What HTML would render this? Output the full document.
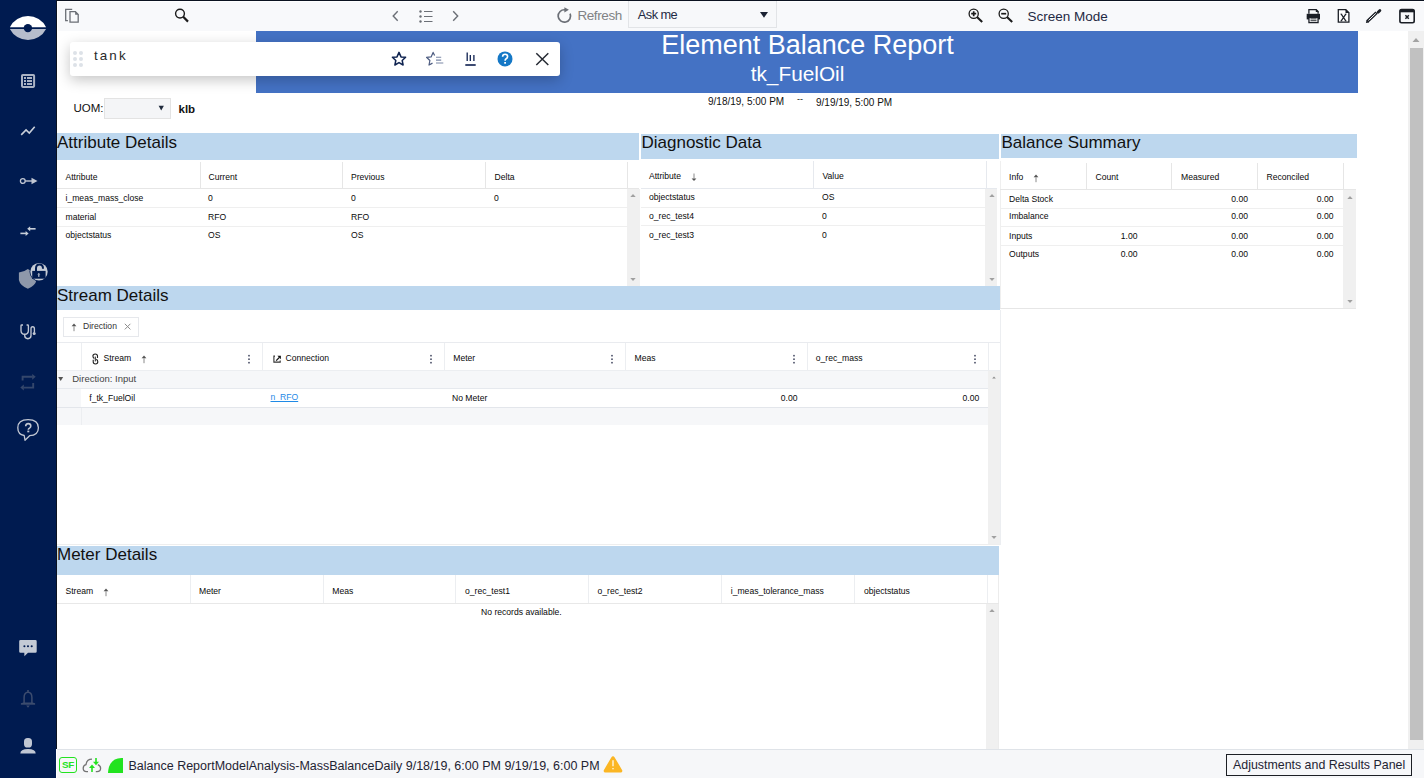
<!DOCTYPE html>
<html><head><meta charset="utf-8"><title>Element Balance Report</title>
<style>
html,body{margin:0;padding:0;width:1424px;height:778px;overflow:hidden;background:#fff;}
body{position:relative;font-family:"Liberation Sans",sans-serif;}
.r{position:absolute;display:block;}
.t{position:absolute;white-space:nowrap;line-height:1;}
</style></head><body>
<div class="r" style="left:0px;top:0px;width:1424px;height:778px;background:#ffffff;"></div>
<div class="r" style="left:0px;top:0px;width:56px;height:778px;background:#001b50;"></div>
<div class="r" style="left:56px;top:0px;width:1px;height:749px;background:#0b1220;"></div>
<div class="r" style="left:57px;top:0px;width:1367px;height:1px;background:#0b1220;"></div>
<div class="r" style="left:57px;top:1px;width:1367px;height:30px;background:#f8f9fb;"></div>
<div class="r" style="left:57px;top:1px;width:1367px;height:1px;background:#ffffff;"></div>
<div class="r" style="left:57px;top:1px;width:1px;height:30px;background:#ffffff;"></div>
<div class="r" style="left:1408px;top:31px;width:16px;height:718px;background:#f0f0f0;"></div>
<div class="r" style="left:1410px;top:48px;width:13px;height:692px;background:#c1c1c1;"></div>
<svg class="r" style="left:1408px;top:31px;" width="16" height="16" viewBox="0 0 16 16"><path d="M4.5 11 L8 7 L11.5 11 Z" fill="#a3a3a3"/></svg>
<div class="r" style="left:256px;top:31px;width:1102px;height:62px;background:#4472c4;"></div>
<div class="t" style="left:207.5px;width:1200px;text-align:center;top:31.74px;font-size:27px;color:#fff;font-weight:400;">Element Balance Report</div>
<div class="t" style="left:197.5px;width:1200px;text-align:center;top:63.89px;font-size:20.8px;color:#fff;font-weight:400;">tk_FuelOil</div>
<div class="t" style="left:708px;top:97.03px;font-size:10px;color:#111;font-weight:400;">9/18/19, 5:00 PM</div>
<div class="t" style="left:797px;top:94.98px;font-size:9px;color:#111;font-weight:400;">--</div>
<div class="t" style="left:816px;top:97.53px;font-size:10px;color:#111;font-weight:400;">9/19/19, 5:00 PM</div>
<div class="t" style="left:73.5px;top:103.27px;font-size:11.5px;color:#111;font-weight:400;">UOM:</div>
<div class="r" style="left:104px;top:98px;width:67px;height:21px;background:#f4f5f7;border:1px solid #e3e3e3;box-sizing:border-box;"></div>
<svg class="r" style="left:158px;top:105px;" width="7" height="7" viewBox="0 0 7 7"><path d="M0.6 0.7 L5.9 0.7 L3.25 5.6 Z" fill="#1f2a3c"/></svg>
<div class="t" style="left:178.5px;top:103.57px;font-size:11.5px;color:#111;font-weight:700;">klb</div>
<div class="r" style="left:57px;top:133px;width:582px;height:27px;background:#bdd7ee;"></div>
<div class="t" style="left:57px;top:133.61px;font-size:17px;color:#111;font-weight:400;">Attribute Details</div>
<div class="r" style="left:641px;top:134px;width:358px;height:25px;background:#bdd7ee;"></div>
<div class="t" style="left:641.5px;top:134.41px;font-size:17px;color:#111;font-weight:400;">Diagnostic Data</div>
<div class="r" style="left:1001px;top:134px;width:356px;height:24px;background:#bdd7ee;"></div>
<div class="t" style="left:1001.5px;top:133.61px;font-size:17px;color:#111;font-weight:400;">Balance Summary</div>
<div class="r" style="left:57px;top:286px;width:943px;height:24px;background:#bdd7ee;"></div>
<div class="t" style="left:57px;top:287.11px;font-size:17px;color:#111;font-weight:400;">Stream Details</div>
<div class="r" style="left:57px;top:546px;width:942px;height:29px;background:#bdd7ee;"></div>
<div class="t" style="left:57px;top:546.11px;font-size:17px;color:#111;font-weight:400;">Meter Details</div>
<div class="r" style="left:200px;top:162px;width:1px;height:26px;background:#e6e6e6;"></div>
<div class="r" style="left:342px;top:162px;width:1px;height:26px;background:#e6e6e6;"></div>
<div class="r" style="left:485px;top:162px;width:1px;height:26px;background:#e6e6e6;"></div>
<div class="r" style="left:627px;top:162px;width:1px;height:26px;background:#e6e6e6;"></div>
<div class="r" style="left:57px;top:188px;width:582px;height:1px;background:#e6e6e6;"></div>
<div class="r" style="left:627px;top:189px;width:13px;height:97px;background:#f0f0f0;"></div>
<svg class="r" style="left:629px;top:193px;" width="8" height="5" viewBox="0 0 8 5"><path d="M1.3 3.9 L4 1.1 L6.7 3.9 Z" fill="#a0a0a0"/></svg>
<svg class="r" style="left:629px;top:276.5px;" width="8" height="5" viewBox="0 0 8 5"><path d="M1.3 1.1 L4 3.9 L6.7 1.1 Z" fill="#a0a0a0"/></svg>
<div class="t" style="left:65.5px;top:172.72px;font-size:8.6px;color:#0a0a0a;font-weight:400;">Attribute</div>
<div class="t" style="left:208.5px;top:172.72px;font-size:8.6px;color:#0a0a0a;font-weight:400;">Current</div>
<div class="t" style="left:351px;top:172.72px;font-size:8.6px;color:#0a0a0a;font-weight:400;">Previous</div>
<div class="t" style="left:494.5px;top:172.72px;font-size:8.6px;color:#0a0a0a;font-weight:400;">Delta</div>
<div class="r" style="left:57px;top:207px;width:571px;height:1px;background:#efefef;"></div>
<div class="r" style="left:57px;top:226px;width:571px;height:1px;background:#efefef;"></div>
<div class="t" style="left:65.5px;top:194.02px;font-size:8.6px;color:#0a0a0a;font-weight:400;">i_meas_mass_close</div>
<div class="t" style="left:208px;top:194.02px;font-size:8.6px;color:#0a0a0a;font-weight:400;">0</div>
<div class="t" style="left:351px;top:194.02px;font-size:8.6px;color:#0a0a0a;font-weight:400;">0</div>
<div class="t" style="left:494px;top:194.02px;font-size:8.6px;color:#0a0a0a;font-weight:400;">0</div>
<div class="t" style="left:65.5px;top:212.72px;font-size:8.6px;color:#0a0a0a;font-weight:400;">material</div>
<div class="t" style="left:208px;top:212.72px;font-size:8.6px;color:#0a0a0a;font-weight:400;">RFO</div>
<div class="t" style="left:351px;top:212.72px;font-size:8.6px;color:#0a0a0a;font-weight:400;">RFO</div>
<div class="t" style="left:494px;top:212.72px;font-size:8.6px;color:#0a0a0a;font-weight:400;"></div>
<div class="t" style="left:65.5px;top:230.72px;font-size:8.6px;color:#0a0a0a;font-weight:400;">objectstatus</div>
<div class="t" style="left:208px;top:230.72px;font-size:8.6px;color:#0a0a0a;font-weight:400;">OS</div>
<div class="t" style="left:351px;top:230.72px;font-size:8.6px;color:#0a0a0a;font-weight:400;">OS</div>
<div class="t" style="left:494px;top:230.72px;font-size:8.6px;color:#0a0a0a;font-weight:400;"></div>
<div class="r" style="left:813px;top:161px;width:1px;height:27px;background:#e6e9ee;"></div>
<div class="r" style="left:986px;top:161px;width:1px;height:27px;background:#e6e9ee;"></div>
<div class="r" style="left:641px;top:188px;width:356px;height:1px;background:#e6e9ee;"></div>
<div class="r" style="left:985px;top:189px;width:12px;height:97px;background:#f0f0f0;"></div>
<svg class="r" style="left:987.5px;top:193px;" width="8" height="5" viewBox="0 0 8 5"><path d="M1.3 3.9 L4 1.1 L6.7 3.9 Z" fill="#a0a0a0"/></svg>
<svg class="r" style="left:987.5px;top:277px;" width="8" height="5" viewBox="0 0 8 5"><path d="M1.3 1.1 L4 3.9 L6.7 1.1 Z" fill="#a0a0a0"/></svg>
<div class="t" style="left:649px;top:171.52px;font-size:8.6px;color:#0a0a0a;font-weight:400;">Attribute</div>
<svg class="r" style="left:690.5px;top:172.5px;" width="6" height="9" viewBox="0 0 6 9"><path d="M3 0.5 L3 5.6" stroke="#8a8a8a" stroke-width="1"/><path d="M0.6 5.5 L3 7.9 L5.4 5.5 Z" fill="#555"/></svg>
<div class="t" style="left:822.5px;top:171.52px;font-size:8.6px;color:#0a0a0a;font-weight:400;">Value</div>
<div class="r" style="left:641px;top:207px;width:345px;height:1px;background:#efefef;"></div>
<div class="r" style="left:641px;top:225px;width:345px;height:1px;background:#efefef;"></div>
<div class="t" style="left:649px;top:192.72px;font-size:8.6px;color:#0a0a0a;font-weight:400;">objectstatus</div>
<div class="t" style="left:822px;top:192.72px;font-size:8.6px;color:#0a0a0a;font-weight:400;">OS</div>
<div class="t" style="left:649px;top:211.52px;font-size:8.6px;color:#0a0a0a;font-weight:400;">o_rec_test4</div>
<div class="t" style="left:822px;top:211.52px;font-size:8.6px;color:#0a0a0a;font-weight:400;">0</div>
<div class="t" style="left:649px;top:230.72px;font-size:8.6px;color:#0a0a0a;font-weight:400;">o_rec_test3</div>
<div class="t" style="left:822px;top:230.72px;font-size:8.6px;color:#0a0a0a;font-weight:400;">0</div>
<div class="r" style="left:1000px;top:161px;width:1px;height:148px;background:#efefef;"></div>
<div class="r" style="left:1086px;top:163px;width:1px;height:26px;background:#e6e6e6;"></div>
<div class="r" style="left:1171px;top:163px;width:1px;height:26px;background:#e6e6e6;"></div>
<div class="r" style="left:1257px;top:163px;width:1px;height:26px;background:#e6e6e6;"></div>
<div class="r" style="left:1343px;top:163px;width:1px;height:26px;background:#e6e6e6;"></div>
<div class="r" style="left:1000px;top:189px;width:356px;height:1px;background:#e6e6e6;"></div>
<div class="r" style="left:1000px;top:308px;width:356px;height:1px;background:#e6e6e6;"></div>
<div class="r" style="left:1343px;top:190px;width:13px;height:118px;background:#f0f0f0;"></div>
<svg class="r" style="left:1346px;top:195px;" width="8" height="5" viewBox="0 0 8 5"><path d="M1.3 3.9 L4 1.1 L6.7 3.9 Z" fill="#a0a0a0"/></svg>
<svg class="r" style="left:1346px;top:299px;" width="8" height="5" viewBox="0 0 8 5"><path d="M1.3 1.1 L4 3.9 L6.7 1.1 Z" fill="#a0a0a0"/></svg>
<div class="t" style="left:1009px;top:172.72px;font-size:8.6px;color:#0a0a0a;font-weight:400;">Info</div>
<svg class="r" style="left:1033px;top:173.5px;" width="6" height="9" viewBox="0 0 6 9"><path d="M0.6 3.3 L3 0.5 L5.4 3.3 Z" fill="#555"/><path d="M3 3.2 L3 8.2" stroke="#8a8a8a" stroke-width="1"/></svg>
<div class="t" style="left:1095.5px;top:172.72px;font-size:8.6px;color:#0a0a0a;font-weight:400;">Count</div>
<div class="t" style="left:1181px;top:172.72px;font-size:8.6px;color:#0a0a0a;font-weight:400;">Measured</div>
<div class="t" style="left:1266.5px;top:172.72px;font-size:8.6px;color:#0a0a0a;font-weight:400;">Reconciled</div>
<div class="r" style="left:1000px;top:208px;width:343px;height:1px;background:#efefef;"></div>
<div class="r" style="left:1000px;top:226px;width:343px;height:1px;background:#efefef;"></div>
<div class="r" style="left:1000px;top:245px;width:343px;height:1px;background:#efefef;"></div>
<div class="t" style="left:1009px;top:194.52px;font-size:8.6px;color:#0a0a0a;font-weight:400;">Delta Stock</div>
<div class="t" style="left:648px;width:600px;text-align:right;top:194.52px;font-size:8.6px;color:#0a0a0a;font-weight:400;">0.00</div>
<div class="t" style="left:733.5px;width:600px;text-align:right;top:194.52px;font-size:8.6px;color:#0a0a0a;font-weight:400;">0.00</div>
<div class="t" style="left:1009px;top:212.22px;font-size:8.6px;color:#0a0a0a;font-weight:400;">Imbalance</div>
<div class="t" style="left:648px;width:600px;text-align:right;top:212.22px;font-size:8.6px;color:#0a0a0a;font-weight:400;">0.00</div>
<div class="t" style="left:733.5px;width:600px;text-align:right;top:212.22px;font-size:8.6px;color:#0a0a0a;font-weight:400;">0.00</div>
<div class="t" style="left:1009px;top:231.52px;font-size:8.6px;color:#0a0a0a;font-weight:400;">Inputs</div>
<div class="t" style="left:537.5px;width:600px;text-align:right;top:231.52px;font-size:8.6px;color:#0a0a0a;font-weight:400;">1.00</div>
<div class="t" style="left:648px;width:600px;text-align:right;top:231.52px;font-size:8.6px;color:#0a0a0a;font-weight:400;">0.00</div>
<div class="t" style="left:733.5px;width:600px;text-align:right;top:231.52px;font-size:8.6px;color:#0a0a0a;font-weight:400;">0.00</div>
<div class="t" style="left:1009px;top:249.52px;font-size:8.6px;color:#0a0a0a;font-weight:400;">Outputs</div>
<div class="t" style="left:537.5px;width:600px;text-align:right;top:249.52px;font-size:8.6px;color:#0a0a0a;font-weight:400;">0.00</div>
<div class="t" style="left:648px;width:600px;text-align:right;top:249.52px;font-size:8.6px;color:#0a0a0a;font-weight:400;">0.00</div>
<div class="t" style="left:733.5px;width:600px;text-align:right;top:249.52px;font-size:8.6px;color:#0a0a0a;font-weight:400;">0.00</div>
<div class="r" style="left:63px;top:317px;width:76px;height:20px;background:#fff;border:1px solid #e6e8ec;box-sizing:border-box;"></div>
<svg class="r" style="left:70.5px;top:322.5px;" width="6" height="9" viewBox="0 0 6 9"><path d="M0.6 3.3 L3 0.5 L5.4 3.3 Z" fill="#555"/><path d="M3 3.2 L3 8.2" stroke="#8a8a8a" stroke-width="1"/></svg>
<div class="t" style="left:83px;top:322.22px;font-size:8.6px;color:#333;font-weight:400;">Direction</div>
<svg class="r" style="left:123px;top:322px;" width="9" height="9" viewBox="0 0 9 9"><path d="M1.8 1.8 L7.4 7.4 M7.4 1.8 L1.8 7.4" stroke="#8c8c8c" stroke-width="1"/></svg>
<div class="r" style="left:57px;top:342px;width:943px;height:1px;background:#e9ebef;"></div>
<div class="r" style="left:81px;top:343px;width:1px;height:27px;background:#eceef1;"></div>
<div class="r" style="left:262px;top:343px;width:1px;height:27px;background:#eceef1;"></div>
<div class="r" style="left:444px;top:343px;width:1px;height:27px;background:#eceef1;"></div>
<div class="r" style="left:625px;top:343px;width:1px;height:27px;background:#eceef1;"></div>
<div class="r" style="left:807px;top:343px;width:1px;height:27px;background:#eceef1;"></div>
<div class="r" style="left:988px;top:343px;width:1px;height:27px;background:#eceef1;"></div>
<div class="r" style="left:1000px;top:310px;width:1px;height:235px;background:#eceef1;"></div>
<div class="r" style="left:57px;top:370px;width:943px;height:1px;background:#eceef1;"></div>
<svg class="r" style="left:91px;top:353px;" width="9" height="12" viewBox="0 0 9 12"><path d="M3.3 5.6 Q1.9 4.6 1.9 3.1 Q1.9 1 4.2 1 Q6.5 1 6.5 3.1 L6.5 5" fill="none" stroke="#222" stroke-width="1.1"/><path d="M5.3 6.2 Q6.8 7.2 6.8 8.8 Q6.8 11 4.5 11 Q2.2 11 2.2 8.8 L2.2 6.8" fill="none" stroke="#222" stroke-width="1.1"/><path d="M4.3 3.6 L4.3 8.4" stroke="#222" stroke-width="1"/></svg>
<div class="t" style="left:103.5px;top:353.72px;font-size:8.6px;color:#0a0a0a;font-weight:400;">Stream</div>
<svg class="r" style="left:141px;top:355.0px;" width="6" height="9" viewBox="0 0 6 9"><path d="M0.6 3.3 L3 0.5 L5.4 3.3 Z" fill="#555"/><path d="M3 3.2 L3 8.2" stroke="#8a8a8a" stroke-width="1"/></svg>
<svg class="r" style="left:247px;top:352.5px;" width="4" height="11" viewBox="0 0 4 11"><circle cx="2" cy="2.7" r="0.9" fill="#4a4f66"/><circle cx="2" cy="6.2" r="0.9" fill="#4a4f66"/><circle cx="2" cy="9.7" r="0.9" fill="#4a4f66"/></svg>
<svg class="r" style="left:272px;top:353px;" width="10" height="11" viewBox="0 0 10 11"><path d="M3 3.1 L1.9 3.1 L1.9 9.1 L8.2 9.1 L8.2 7.6" fill="none" stroke="#333" stroke-width="1.1"/><path d="M4.2 7.6 L7.4 4.4" stroke="#111" stroke-width="1.3"/><path d="M5.4 2.7 L8.9 2.7 L8.9 6.2 Z" fill="#111"/></svg>
<div class="t" style="left:285.5px;top:353.72px;font-size:8.6px;color:#0a0a0a;font-weight:400;">Connection</div>
<svg class="r" style="left:428.75px;top:352.5px;" width="4" height="11" viewBox="0 0 4 11"><circle cx="2" cy="2.7" r="0.9" fill="#4a4f66"/><circle cx="2" cy="6.2" r="0.9" fill="#4a4f66"/><circle cx="2" cy="9.7" r="0.9" fill="#4a4f66"/></svg>
<div class="t" style="left:453.25px;top:353.72px;font-size:8.6px;color:#0a0a0a;font-weight:400;">Meter</div>
<svg class="r" style="left:610px;top:352.5px;" width="4" height="11" viewBox="0 0 4 11"><circle cx="2" cy="2.7" r="0.9" fill="#4a4f66"/><circle cx="2" cy="6.2" r="0.9" fill="#4a4f66"/><circle cx="2" cy="9.7" r="0.9" fill="#4a4f66"/></svg>
<div class="t" style="left:634.5px;top:353.72px;font-size:8.6px;color:#0a0a0a;font-weight:400;">Meas</div>
<svg class="r" style="left:791.75px;top:352.5px;" width="4" height="11" viewBox="0 0 4 11"><circle cx="2" cy="2.7" r="0.9" fill="#4a4f66"/><circle cx="2" cy="6.2" r="0.9" fill="#4a4f66"/><circle cx="2" cy="9.7" r="0.9" fill="#4a4f66"/></svg>
<div class="t" style="left:815.75px;top:353.72px;font-size:8.6px;color:#0a0a0a;font-weight:400;">o_rec_mass</div>
<svg class="r" style="left:973px;top:352.5px;" width="4" height="11" viewBox="0 0 4 11"><circle cx="2" cy="2.7" r="0.9" fill="#4a4f66"/><circle cx="2" cy="6.2" r="0.9" fill="#4a4f66"/><circle cx="2" cy="9.7" r="0.9" fill="#4a4f66"/></svg>
<div class="r" style="left:57px;top:371px;width:931px;height:17px;background:#f6f7f9;"></div>
<div class="r" style="left:57px;top:388px;width:931px;height:1px;background:#e6e9ee;"></div>
<svg class="r" style="left:57px;top:376px;" width="8" height="6" viewBox="0 0 8 6"><path d="M1.2 1 L6.2 1 L3.7 5 Z" fill="#555"/></svg>
<div class="t" style="left:72.25px;top:374.26px;font-size:9.5px;color:#444;font-weight:400;">Direction: Input</div>
<div class="r" style="left:57px;top:389px;width:24px;height:18px;background:#f6f7f9;"></div>
<div class="r" style="left:81px;top:389px;width:907px;height:18px;background:#fff;"></div>
<div class="r" style="left:57px;top:407px;width:931px;height:1px;background:#e3e6eb;"></div>
<div class="t" style="left:89.25px;top:393.72px;font-size:8.6px;color:#0a0a0a;font-weight:400;">f_tk_FuelOil</div>
<div class="t" style="left:270.5px;top:393.12px;font-size:8.6px;color:#1f8ae6;font-weight:400;text-decoration:underline;">n_RFO</div>
<div class="t" style="left:452px;top:393.72px;font-size:8.6px;color:#0a0a0a;font-weight:400;">No Meter</div>
<div class="t" style="left:197.5px;width:600px;text-align:right;top:393.72px;font-size:8.6px;color:#0a0a0a;font-weight:400;">0.00</div>
<div class="t" style="left:379.25px;width:600px;text-align:right;top:393.72px;font-size:8.6px;color:#0a0a0a;font-weight:400;">0.00</div>
<div class="r" style="left:57px;top:408px;width:931px;height:17px;background:#f6f7f9;"></div>
<div class="r" style="left:81px;top:408px;width:1px;height:17px;background:#eceef1;"></div>
<div class="r" style="left:988px;top:371px;width:12px;height:173px;background:#f0f0f0;"></div>
<svg class="r" style="left:990px;top:375px;" width="8" height="5" viewBox="0 0 8 5"><path d="M2.2 3.6 L4 1.6 L5.8 3.6 Z" fill="#8a8a8a"/></svg>
<svg class="r" style="left:990px;top:535px;" width="8" height="5" viewBox="0 0 8 5"><path d="M1.3 1.1 L4 3.9 L6.7 1.1 Z" fill="#a0a0a0"/></svg>
<div class="r" style="left:57px;top:544px;width:943px;height:1px;background:#eeeeee;"></div>
<div class="r" style="left:190px;top:575px;width:1px;height:28px;background:#eceef1;"></div>
<div class="r" style="left:323px;top:575px;width:1px;height:28px;background:#eceef1;"></div>
<div class="r" style="left:455px;top:575px;width:1px;height:28px;background:#eceef1;"></div>
<div class="r" style="left:588px;top:575px;width:1px;height:28px;background:#eceef1;"></div>
<div class="r" style="left:721px;top:575px;width:1px;height:28px;background:#eceef1;"></div>
<div class="r" style="left:854px;top:575px;width:1px;height:28px;background:#eceef1;"></div>
<div class="r" style="left:987px;top:575px;width:1px;height:28px;background:#eceef1;"></div>
<div class="r" style="left:998px;top:575px;width:1px;height:174px;background:#ececec;"></div>
<div class="r" style="left:57px;top:603px;width:942px;height:1px;background:#e8e8e8;"></div>
<div class="t" style="left:65.5px;top:586.52px;font-size:8.6px;color:#0a0a0a;font-weight:400;">Stream</div>
<svg class="r" style="left:102.5px;top:587.7px;" width="6" height="9" viewBox="0 0 6 9"><path d="M0.6 3.3 L3 0.5 L5.4 3.3 Z" fill="#555"/><path d="M3 3.2 L3 8.2" stroke="#8a8a8a" stroke-width="1"/></svg>
<div class="t" style="left:199px;top:586.52px;font-size:8.6px;color:#0a0a0a;font-weight:400;">Meter</div>
<div class="t" style="left:332.25px;top:586.52px;font-size:8.6px;color:#0a0a0a;font-weight:400;">Meas</div>
<div class="t" style="left:465px;top:586.52px;font-size:8.6px;color:#0a0a0a;font-weight:400;">o_rec_test1</div>
<div class="t" style="left:597.5px;top:586.52px;font-size:8.6px;color:#0a0a0a;font-weight:400;">o_rec_test2</div>
<div class="t" style="left:730.75px;top:586.52px;font-size:8.6px;color:#0a0a0a;font-weight:400;">i_meas_tolerance_mass</div>
<div class="t" style="left:864px;top:586.52px;font-size:8.6px;color:#0a0a0a;font-weight:400;">objectstatus</div>
<div class="t" style="left:-78.60000000000002px;width:1200px;text-align:center;top:607.72px;font-size:8.6px;color:#0a0a0a;font-weight:400;">No records available.</div>
<div class="r" style="left:986px;top:604px;width:12px;height:145px;background:#f0f0f0;"></div>
<svg class="r" style="left:988px;top:608px;" width="8" height="5" viewBox="0 0 8 5"><path d="M1.3 3.9 L4 1.1 L6.7 3.9 Z" fill="#a0a0a0"/></svg>
<div class="r" style="left:57px;top:749px;width:1367px;height:1px;background:#dfe3e8;"></div>
<div class="r" style="left:57px;top:750px;width:1367px;height:28px;background:#f6f7f9;"></div>
<div class="r" style="left:59px;top:757px;width:18px;height:16px;background:transparent;border:1.8px solid #22e31f;border-radius:3px;box-sizing:border-box;"></div>
<div class="t" style="left:62px;top:759.92px;font-size:9.9px;color:#22e31f;font-weight:700;letter-spacing:-0.4px;">SF</div>
<svg class="r" style="left:82px;top:757px;" width="20" height="16" viewBox="0 0 20 16"><path d="M6 14.6 L4.5 14.6 Q1.2 14.6 1.2 11.2 Q1.2 8.2 4 7.6 Q4.8 2.2 10 2.2" fill="none" stroke="#737373" stroke-width="1.3"/><path d="M15.8 7.6 Q18.6 8.6 18.6 11.2 Q18.6 14.6 15 14.6 L13.8 14.6" fill="none" stroke="#737373" stroke-width="1.3"/><path d="M10 15 L10 9" stroke="#22e31f" stroke-width="1.6"/><path d="M7 11 L10 7.6 L13 11 Z" fill="#22e31f"/><path d="M14 1 L14 6.5" stroke="#22e31f" stroke-width="1.6"/><path d="M11 4.8 L14 8.2 L17 4.8 Z" fill="#22e31f"/></svg>
<svg class="r" style="left:108px;top:757.8px;" width="15" height="15" viewBox="0 0 15 15"><path d="M0 15 Q0.8 0.4 13.5 0 L15 0 L15 15 Z" fill="#22e31f"/></svg>
<div class="t" style="left:128.5px;top:760.02px;font-size:12.5px;color:#1f2433;font-weight:400;">Balance ReportModelAnalysis-MassBalanceDaily 9/18/19, 6:00 PM 9/19/19, 6:00 PM</div>
<svg class="r" style="left:603px;top:755px;" width="20" height="18" viewBox="0 0 20 18"><path d="M10 1.2 Q11 1.2 11.7 2.4 L19.2 15.2 Q19.8 16.6 18.3 17.6 L1.7 17.6 Q0.2 16.6 0.8 15.2 L8.3 2.4 Q9 1.2 10 1.2 Z" fill="#fbb624"/><path d="M10 5.3 L10 11.3" stroke="#fff6e0" stroke-width="1.4"/><rect x="9.3" y="13" width="1.4" height="1.3" fill="#fff6e0"/></svg>
<div class="r" style="left:1226px;top:754px;width:186px;height:22px;background:transparent;border:1px solid #1c1f24;box-sizing:border-box;"></div>
<div class="t" style="left:1233px;top:758.90px;font-size:12.4px;color:#1f2433;font-weight:400;">Adjustments and Results Panel</div>
<svg class="r" style="left:64px;top:8px;" width="16" height="16" viewBox="0 0 16 16"><path d="M8.2 1.4 L1.7 1.4 L1.7 12.6 L3.9 12.6" fill="none" stroke="#6b6f76" stroke-width="1.3"/><path d="M6 3.6 L11.4 3.6 L14.2 6.4 L14.2 14.1 L6 14.1 Z" fill="none" stroke="#6b6f76" stroke-width="1.3"/><path d="M11.1 3.2 L14.6 6.7 L11.1 6.7 Z" fill="#6b6f76"/></svg>
<svg class="r" style="left:172px;top:6px;" width="18" height="18" viewBox="0 0 18 18"><circle cx="8" cy="7.6" r="4.4" fill="none" stroke="#1b1b1b" stroke-width="1.4"/><path d="M11.2 10.8 L16 15.6" stroke="#1b1b1b" stroke-width="2.2"/></svg>
<svg class="r" style="left:390px;top:9px;" width="10" height="14" viewBox="0 0 10 14"><path d="M7.7 2.2 L3.2 7 L7.7 11.8" fill="none" stroke="#6b6f76" stroke-width="1.4"/></svg>
<svg class="r" style="left:418px;top:9px;" width="16" height="14" viewBox="0 0 16 14"><circle cx="2.5" cy="2.5" r="1.2" fill="#6b6f76"/><circle cx="2.5" cy="7.5" r="1.2" fill="#6b6f76"/><circle cx="2.5" cy="12.5" r="1.2" fill="#6b6f76"/><path d="M6 2.5 L14.5 2.5 M6 7.5 L14.5 7.5 M6 12.5 L14.5 12.5" stroke="#6b6f76" stroke-width="1.1"/></svg>
<svg class="r" style="left:450px;top:9px;" width="10" height="14" viewBox="0 0 10 14"><path d="M3.2 2.2 L7.7 7 L3.2 11.8" fill="none" stroke="#6b6f76" stroke-width="1.4"/></svg>
<svg class="r" style="left:556px;top:6px;" width="17" height="18" viewBox="0 0 17 18"><path d="M9 3.8 A6.2 6.2 0 1 0 14.1 7.6" fill="none" stroke="#6b6f76" stroke-width="1.7"/><path d="M8.4 1.2 L12.9 3.8 L8.4 6.4 Z" fill="#6b6f76"/></svg>
<div class="t" style="left:577.4px;top:9.17px;font-size:13.5px;color:#808285;font-weight:400;letter-spacing:-0.4px;">Refresh</div>
<div class="r" style="left:628px;top:1px;width:149px;height:27px;background:#f7f8fa;border:1px solid #e2e4e7;border-top:none;box-sizing:border-box;"></div>
<div class="t" style="left:637.8px;top:9.06px;font-size:12.8px;color:#1f2a44;font-weight:400;letter-spacing:-0.55px;">Ask me</div>
<svg class="r" style="left:759px;top:11px;" width="10" height="8" viewBox="0 0 10 8"><path d="M1 1 L9 1 L5 6.8 Z" fill="#1b2233"/></svg>
<svg class="r" style="left:967px;top:7px;" width="18" height="18" viewBox="0 0 18 18"><circle cx="6.7" cy="6.7" r="4.6" fill="none" stroke="#1b1b1b" stroke-width="1.3"/><path d="M10 10 L15.2 14.9" stroke="#1b1b1b" stroke-width="2.1"/><path d="M4.2 6.7 L9.2 6.7 M6.7 4.2 L6.7 9.2" stroke="#1b1b1b" stroke-width="1.7"/></svg>
<svg class="r" style="left:997px;top:7px;" width="18" height="18" viewBox="0 0 18 18"><circle cx="6.7" cy="6.7" r="4.6" fill="none" stroke="#1b1b1b" stroke-width="1.3"/><path d="M10 10 L15.2 14.9" stroke="#1b1b1b" stroke-width="2.1"/><path d="M4.2 6.7 L9.2 6.7" stroke="#1b1b1b" stroke-width="1.7"/></svg>
<div class="t" style="left:1027.5px;top:9.87px;font-size:13.5px;color:#1f2a44;font-weight:400;">Screen Mode</div>
<svg class="r" style="left:1305px;top:8px;" width="17" height="16" viewBox="0 0 17 16"><path d="M3.9 5.8 L3.9 1.7 L11.2 1.7 L13.1 3.6 L13.1 5.8" fill="none" stroke="#1b1f26" stroke-width="1.3"/><path d="M10.8 1.1 L13.7 4 L10.8 4 Z" fill="#1b1f26"/><rect x="1.7" y="5.8" width="13.3" height="3.3" fill="#1b1f26"/><rect x="1.7" y="8.8" width="2.4" height="2.6" fill="#1b1f26"/><rect x="12.8" y="8.8" width="2.2" height="2.6" fill="#1b1f26"/><rect x="3.95" y="9.5" width="9.1" height="5.1" fill="#fff" stroke="#1b1f26" stroke-width="1.3"/><path d="M5.5 10.9 L11.5 10.9 M5.5 12.7 L11.5 12.7" stroke="#1b1f26" stroke-width="0.9"/></svg>
<svg class="r" style="left:1336px;top:8px;" width="15" height="16" viewBox="0 0 15 16"><path d="M2.3 1.7 L9.8 1.7 L12.9 4.8 L12.9 14.2 L2.3 14.2 Z" fill="#fff" stroke="#1b1f26" stroke-width="1.3"/><path d="M9.5 1.1 L13.5 5.1 L9.5 5.1 Z" fill="#1b1f26"/><path d="M5.2 6.2 L9.8 12.8 M9.8 6.2 L5.2 12.8" stroke="#1b1f26" stroke-width="1.2"/><path d="M4.4 6.1 L6.2 6.1 M8.8 6.1 L10.6 6.1 M4.4 12.9 L6.2 12.9 M8.8 12.9 L10.6 12.9" stroke="#1b1f26" stroke-width="0.7"/></svg>
<svg class="r" style="left:1365px;top:8px;" width="17" height="16" viewBox="0 0 17 16"><path d="M2.4 13.4 L11.6 4.6" stroke="#1b1f26" stroke-width="3.2"/><path d="M0.9 15.1 L1.5 11.9 L4.1 14.5 Z" fill="#1b1f26"/><path d="M3.5 12.4 L10.8 5.4" stroke="#fff" stroke-width="1"/><path d="M13.1 4.2 L14.9 2.4" stroke="#1b1f26" stroke-width="2.8" stroke-linecap="round"/></svg>
<svg class="r" style="left:1397px;top:8px;" width="19" height="16" viewBox="0 0 19 16"><rect x="2.9" y="1.6" width="14.3" height="13.2" rx="1.7" fill="none" stroke="#1b1f26" stroke-width="1.6"/><rect x="2.9" y="1.6" width="14.3" height="2.7" fill="#1b1f26"/><path d="M8.4 7.3 L11.8 10.7 M11.8 7.3 L8.4 10.7" stroke="#1b1f26" stroke-width="1.5"/></svg>
<div class="r" style="left:70px;top:42px;width:490px;height:34px;background:#fff;border-radius:3px;box-shadow:0 4px 14px rgba(0,0,0,0.23);"></div>
<div class="r" style="left:73px;top:51px;width:4px;height:4px;border-radius:2px;background:#dde2e8"></div>
<div class="r" style="left:73px;top:57px;width:4px;height:4px;border-radius:2px;background:#dde2e8"></div>
<div class="r" style="left:73px;top:63px;width:4px;height:4px;border-radius:2px;background:#dde2e8"></div>
<div class="r" style="left:79px;top:51px;width:4px;height:4px;border-radius:2px;background:#dde2e8"></div>
<div class="r" style="left:79px;top:57px;width:4px;height:4px;border-radius:2px;background:#dde2e8"></div>
<div class="r" style="left:79px;top:63px;width:4px;height:4px;border-radius:2px;background:#dde2e8"></div>
<div class="t" style="left:94px;top:48.66px;font-size:13.4px;color:#2a2a2a;font-weight:400;letter-spacing:2.1px;">tank</div>
<svg class="r" style="left:390px;top:50px;" width="18" height="17" viewBox="0 0 18 17"><path d="M9 2.4 L11 6.9 L15.6 7.3 L12.2 10.5 L13.1 15 L9 12.6 L4.9 15 L5.8 10.5 L2.4 7.3 L7 6.9 Z" fill="none" stroke="#0f2350" stroke-width="1.5" stroke-linejoin="round"/></svg>
<svg class="r" style="left:426px;top:50px;" width="21" height="17" viewBox="0 0 21 17"><path d="M6.5 13.1 L3 15 L3.9 10.5 L0.5 7.3 L5.1 6.9 L7.1 2.4 L8.6 5.6" fill="none" stroke="#4c5b80" stroke-width="1.2" stroke-linejoin="round"/><path d="M10 7.3 L15.2 7.3 M10 10.1 L15.2 10.1 M10 13 L17.3 13" stroke="#7b88a6" stroke-width="1.1"/></svg>
<svg class="r" style="left:464px;top:50px;" width="13" height="17" viewBox="0 0 13 17"><path d="M3.2 2.6 L3.2 11 M6.3 5 L6.3 11 M9.9 5 L9.9 11" stroke="#0d1f4f" stroke-width="1.3"/><path d="M1.3 15 L11.7 15" stroke="#0d1f4f" stroke-width="1.6"/></svg>
<svg class="r" style="left:496px;top:50px;" width="18" height="18" viewBox="0 0 18 18"><circle cx="9" cy="8.9" r="7.5" fill="#1578c6"/><path d="M6.6 6.8 Q6.6 4.2 9.1 4.2 Q11.6 4.2 11.6 6.5 Q11.6 7.9 10.2 8.7 Q9.1 9.3 9.1 10.7" fill="none" stroke="#fff" stroke-width="1.6"/><rect x="8.2" y="12" width="1.8" height="1.7" fill="#fff"/></svg>
<svg class="r" style="left:534px;top:51px;" width="16" height="16" viewBox="0 0 16 16"><path d="M2.3 2.3 L14.3 14 M14.3 2.3 L2.3 14" stroke="#252a33" stroke-width="1.5"/></svg>
<svg class="r" style="left:0px;top:0px;" width="56" height="50" viewBox="0 0 56 50"><path d="M9.9 27.2 A20.3 20.3 0 0 1 46.1 27.2 Z" fill="#fff"/><path d="M9.9 28.9 A20.3 20.3 0 0 0 46.1 28.9 Z" fill="#b6bdcc"/><circle cx="27.9" cy="28.1" r="4.2" fill="#001b50"/></svg>
<svg class="r" style="left:20px;top:73px;" width="16" height="16" viewBox="0 0 16 16"><rect x="2" y="2" width="12.1" height="11.9" rx="0.8" fill="none" stroke="#aab3c4" stroke-width="2"/><rect x="4" y="4" width="2" height="2" fill="#aab3c4"/><rect x="7" y="4" width="5" height="2" fill="#aab3c4"/><rect x="4" y="7" width="2" height="2" fill="#aab3c4"/><rect x="7" y="7" width="5" height="2" fill="#aab3c4"/><rect x="4" y="10" width="2" height="2" fill="#aab3c4"/><rect x="7" y="10" width="5" height="2" fill="#aab3c4"/></svg>
<svg class="r" style="left:18px;top:123px;" width="20" height="16" viewBox="0 0 20 16"><path d="M3.2 11.9 L8.05 6.9 L11.3 10.1 L16.7 3.8" fill="none" stroke="#c8cfd9" stroke-width="1.6"/></svg>
<svg class="r" style="left:17.5px;top:175px;" width="22" height="12" viewBox="0 0 22 12"><circle cx="4.8" cy="6" r="2.4" fill="none" stroke="#c2c8d3" stroke-width="1.3"/><path d="M7.2 6 L14.5 6" stroke="#c2c8d3" stroke-width="1.4"/><path d="M13.5 2.8 L19.5 6 L13.5 9.2 Z" fill="#c2c8d3"/></svg>
<svg class="r" style="left:18px;top:224px;" width="20" height="14" viewBox="0 0 20 14"><path d="M2.4 9.4 L8.6 9.4" stroke="#c8cfd9" stroke-width="1.6"/><path d="M7.6 6.9 L10.6 9.4 L7.6 11.9 Z" fill="#c8cfd9"/><path d="M17.6 4.8 L11.4 4.8" stroke="#c8cfd9" stroke-width="1.6"/><path d="M12.2 2.2 L9.2 4.8 L12.2 7.3 Z" fill="#c8cfd9"/></svg>
<svg class="r" style="left:17px;top:259px;" width="34" height="32" viewBox="0 0 34 32"><path d="M1.9 13.4 Q7 13 10.8 9.9 Q14.6 13 19.5 13.4 L19.5 21 Q18.5 26.5 10.9 29.8 Q3 26.5 1.9 21 Z" fill="#8e98aa"/><circle cx="22" cy="12.75" r="9.5" fill="#001b50"/><circle cx="22" cy="12.75" r="8.7" fill="#c5cbd5"/><rect x="15.2" y="11.9" width="13.4" height="7.8" fill="#001b50"/><path d="M19 12.2 L19 9.3 Q19 5.6 22.5 5.6 Q26 5.6 26 9.7" fill="none" stroke="#001b50" stroke-width="2"/><path d="M20.3 15.6 L21.8 13.9 L23.3 15.6 Z" fill="#c5cbd5"/><rect x="21.2" y="15.4" width="1.2" height="2.4" fill="#c5cbd5"/></svg>
<svg class="r" style="left:15px;top:318px;" width="26" height="26" viewBox="0 0 26 26"><path d="M8 7 L6.8 7 Q6 7 6 7.8 L6 12.4 Q6 16.2 9.7 16.2 Q13.4 16.2 13.4 12.4 L13.4 7.8 Q13.4 7 12.6 7 L11.6 7" fill="none" stroke="#c2c8d3" stroke-width="1.35"/><path d="M9.7 16.2 L9.7 17.6 Q9.7 20.7 12.9 20.7 Q16 20.7 16 17.6 L16 10.7 Q16 8.7 17.7 8.7 Q19.4 8.7 19.4 10.7 L19.4 14.5" fill="none" stroke="#c2c8d3" stroke-width="1.35"/><circle cx="19.2" cy="15.6" r="1.5" fill="#c2c8d3"/></svg>
<svg class="r" style="left:18px;top:372px;" width="20" height="20" viewBox="0 0 20 20"><path d="M4.6 8.6 L4.6 4.8 L14.6 4.8" fill="none" stroke="#34476b" stroke-width="1.9"/><path d="M14.2 1.9 L17.7 4.8 L14.2 7.7 Z" fill="#34476b"/><path d="M15.2 11.1 L15.2 15.6 L5.4 15.6" fill="none" stroke="#34476b" stroke-width="1.9"/><path d="M5.8 12.6 L2.3 15.6 L5.8 18.6 Z" fill="#34476b"/></svg>
<svg class="r" style="left:15px;top:417px;" width="26" height="26" viewBox="0 0 26 26"><path d="M9.2 18.5 Q2.8 17.6 2.8 10.8 Q2.8 2.6 13.1 2.6 Q23.4 2.6 23.4 10.8 Q23.4 18.4 14.6 18.7 L10 23.2 Z" fill="none" stroke="#c2c8d3" stroke-width="1.3" stroke-linejoin="round"/><path d="M10.7 9.3 Q10.7 6.6 13.2 6.6 Q15.8 6.6 15.8 9 Q15.8 10.3 14.5 11.1 Q13.3 11.8 13.3 12.8" fill="none" stroke="#c2c8d3" stroke-width="1.6"/><rect x="12.3" y="13.6" width="2" height="1.7" fill="#c2c8d3"/></svg>
<svg class="r" style="left:17px;top:637px;" width="22" height="22" viewBox="0 0 22 22"><path d="M3.5 2.9 L18.4 2.9 Q19.7 2.9 19.7 4.2 L19.7 14.4 Q19.7 15.7 18.4 15.7 L11 15.7 L7.4 19.2 L7.3 15.7 L3.5 15.7 Q2.2 15.7 2.2 14.4 L2.2 4.2 Q2.2 2.9 3.5 2.9 Z" fill="#c3cad5"/><circle cx="7.4" cy="9.3" r="1.05" fill="#001b50"/><circle cx="11" cy="9.3" r="1.05" fill="#001b50"/><circle cx="14.7" cy="9.3" r="1.05" fill="#001b50"/></svg>
<svg class="r" style="left:18px;top:688px;" width="20" height="22" viewBox="0 0 20 22"><path d="M6.1 15.5 L6.1 9.6 Q6.1 4.3 10 4.3 Q13.9 4.3 13.9 9.6 L13.9 15.5" fill="none" stroke="#3c4c6e" stroke-width="1.5"/><path d="M3 15.9 Q3.6 14.6 5.4 14.4 L14.6 14.4 Q16.4 14.6 17 15.9 Z" fill="#3c4c6e"/><rect x="2.9" y="15.2" width="14.2" height="1.5" fill="#3c4c6e"/><rect x="9.2" y="2" width="1.6" height="2.6" fill="#3c4c6e"/><path d="M8.2 17.6 L11.8 17.6 L10 19.8 Z" fill="#3c4c6e"/></svg>
<svg class="r" style="left:18px;top:736px;" width="20" height="20" viewBox="0 0 20 20"><rect x="6" y="2" width="8" height="9.5" rx="3.6" fill="#c0c7d3"/><path d="M2.3 17.6 Q2.3 13.3 10 13.1 Q17.7 13.3 17.7 17.6 Z" fill="#c0c7d3"/></svg>
</body></html>
